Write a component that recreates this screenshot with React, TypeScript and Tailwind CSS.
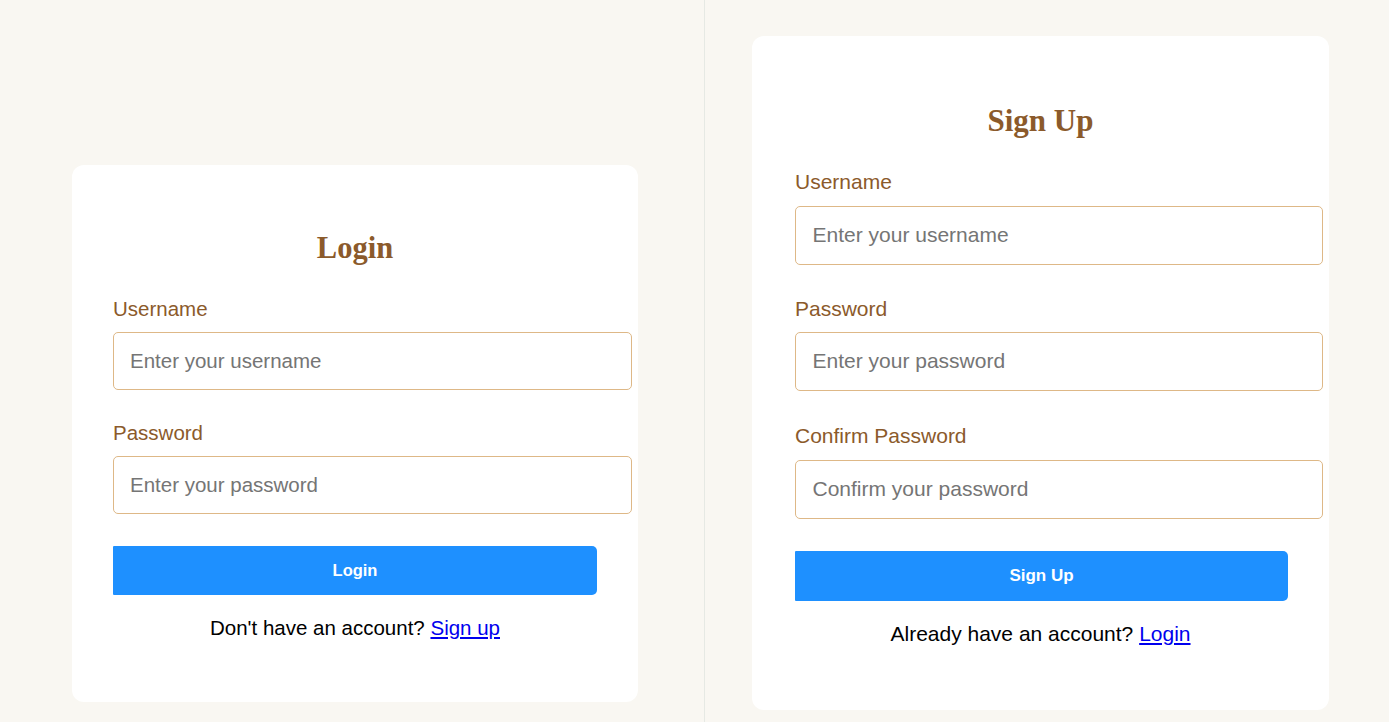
import React from "react";

const sans = { fontFamily: '"Liberation Sans", Arial, sans-serif' };
const serif = { fontFamily: '"Liberation Serif", "Times New Roman", serif' };

export default function App() {
  return (
    <div className="flex w-[1389px] h-[722px] bg-[#f9f7f2] overflow-hidden" style={sans}>
      {/* Left: Login */}
      <div className="w-[704px] h-full shrink-0 pt-[165px] pl-[72px]">
        <div className="w-[566px] h-[537px] bg-white rounded-[12px] pt-[68px] px-[41px] flex flex-col">
          <h2 className="text-[30.5px] leading-none font-bold text-[#8b5a2b] text-center h-[30.5px]" style={serif}>
            Login
          </h2>
          <label className="mt-[35px] text-[20.5px] leading-none h-[20.5px] text-[#8b5a2b]">Username</label>
          <input
            className="mt-[13px] box-content w-[485px] h-[56px] px-[16px] border border-[#deb887] rounded-[5px] text-[20.5px] outline-none placeholder:text-[#757575]"
            placeholder="Enter your username"
            style={sans}
          />
          <label className="mt-[33px] text-[20.5px] leading-none h-[20.5px] text-[#8b5a2b]">Password</label>
          <input
            type="password"
            className="mt-[12.5px] box-content w-[485px] h-[56px] px-[16px] border border-[#deb887] rounded-[5px] text-[20.5px] outline-none placeholder:text-[#757575]"
            placeholder="Enter your password"
            style={sans}
          />
          <button
            className="mt-[32px] w-[484px] h-[49px] bg-[#1e90ff] text-white font-bold text-[16.5px] rounded-r-[5px] rounded-l-[1px]"
            style={sans}
          >
            Login
          </button>
          <p className="mt-[22.5px] text-[20.5px] leading-none text-black text-center">
            Don't have an account? <a href="#" className="text-[#0000ee] underline">Sign up</a>
          </p>
        </div>
      </div>

      {/* Divider */}
      <div className="w-px h-full bg-[#e6e9e4] shrink-0" />

      {/* Right: Sign Up */}
      <div className="flex-1 h-full pt-[36px] pl-[47px]">
        <div className="w-[577px] h-[674px] bg-white rounded-[12px] pt-[69px] px-[43px] flex flex-col">
          <h2 className="text-[31px] leading-none font-bold text-[#8b5a2b] text-center h-[31px]" style={serif}>
            Sign Up
          </h2>
          <label className="mt-[35px] text-[21px] leading-none h-[21px] text-[#8b5a2b]">Username</label>
          <input
            className="mt-[13.8px] box-content w-[493px] h-[57px] px-[16.5px] border border-[#deb887] rounded-[5px] text-[21px] outline-none placeholder:text-[#757575]"
            placeholder="Enter your username"
            style={sans}
          />
          <label className="mt-[33px] text-[21px] leading-none h-[21px] text-[#8b5a2b]">Password</label>
          <input
            type="password"
            className="mt-[12.8px] box-content w-[493px] h-[57px] px-[16.5px] border border-[#deb887] rounded-[5px] text-[21px] outline-none placeholder:text-[#757575]"
            placeholder="Enter your password"
            style={sans}
          />
          <label className="mt-[34px] text-[21px] leading-none h-[21px] text-[#8b5a2b]">Confirm Password</label>
          <input
            type="password"
            className="mt-[14px] box-content w-[493px] h-[57px] px-[16.5px] border border-[#deb887] rounded-[5px] text-[21px] outline-none placeholder:text-[#757575]"
            placeholder="Confirm your password"
            style={sans}
          />
          <button
            className="mt-[32px] w-[493px] h-[50px] bg-[#1e90ff] text-white font-bold text-[17px] rounded-r-[5px] rounded-l-[1px]"
            style={sans}
          >
            Sign Up
          </button>
          <p className="mt-[22px] text-[21px] leading-none text-black text-center">
            Already have an account? <a href="#" className="text-[#0000ee] underline">Login</a>
          </p>
        </div>
      </div>
    </div>
  );
}
